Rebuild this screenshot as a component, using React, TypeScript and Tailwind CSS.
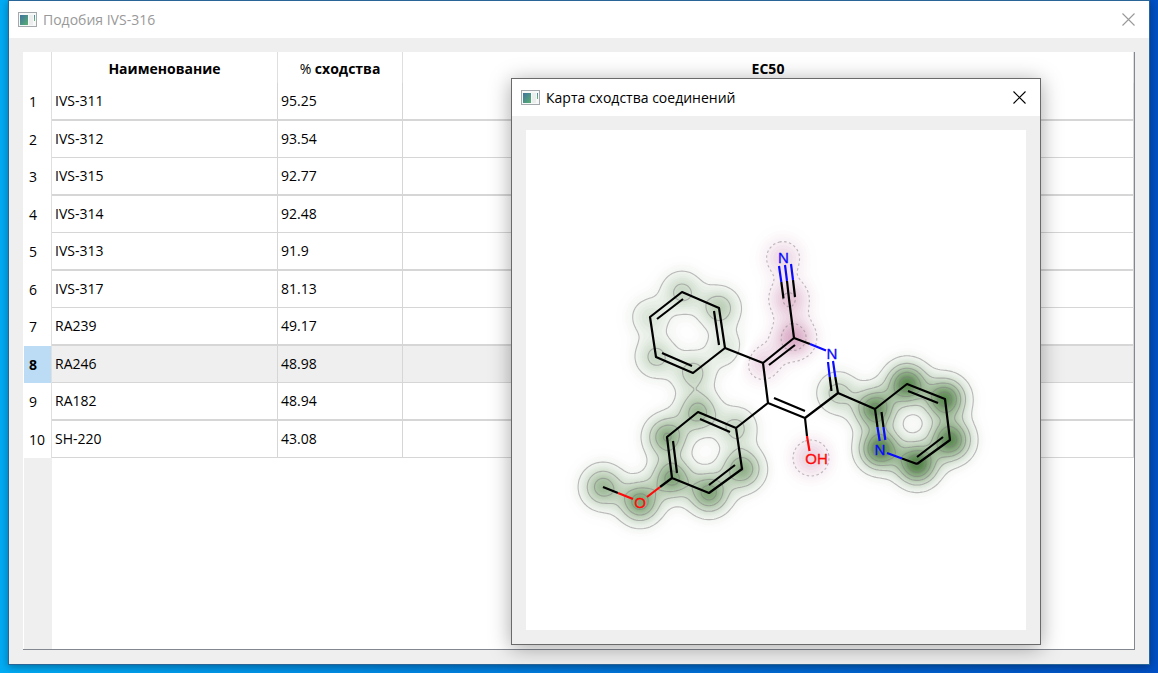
import React, { useMemo } from "react";

type Point = [number, number];
type Atom = { x: number; y: number; weight: number };

const ROWS = [
  { name: "IVS-311", similarity: "95.25" },
  { name: "IVS-312", similarity: "93.54" },
  { name: "IVS-315", similarity: "92.77" },
  { name: "IVS-314", similarity: "92.48" },
  { name: "IVS-313", similarity: "91.9" },
  { name: "IVS-317", similarity: "81.13" },
  { name: "RA239", similarity: "49.17" },
  { name: "RA246", similarity: "48.98" },
  { name: "RA182", similarity: "48.94" },
  { name: "SH-220", similarity: "43.08" },
];
const SELECTED = 7;

const ATOMS: Atom[] = [
  // phenyl
  { x: 156, y: 162, weight: 1.8 },
  { x: 193, y: 178, weight: 2.2 },
  { x: 199, y: 218, weight: 1.1 },
  { x: 167, y: 243, weight: 1.9 },
  { x: 130, y: 227, weight: 1.8 },
  { x: 124, y: 187, weight: 1.2 },
  // methoxyphenyl
  { x: 172, y: 282, weight: 3.0 },
  { x: 210, y: 298, weight: 1.8 },
  { x: 216, y: 339, weight: 3.5 },
  { x: 183, y: 363, weight: 4.0 },
  { x: 146, y: 348, weight: 3.9 },
  { x: 141, y: 307, weight: 3.6 },
  { x: 114, y: 372, weight: 4.1 },
  { x: 77, y: 357, weight: 3.1 },
  // pyridyl
  { x: 349, y: 279, weight: 4.8 },
  { x: 381, y: 254, weight: 5.2 },
  { x: 419, y: 269, weight: 5.1 },
  { x: 424, y: 310, weight: 5.1 },
  { x: 391, y: 334, weight: 5.5 },
  { x: 354, y: 319, weight: 5.3 },
  // central ring and substituents
  { x: 312, y: 263, weight: 1.9 },
  { x: 268, y: 208, weight: -2.3 },
  { x: 237, y: 233, weight: -1.1 },
  { x: 263, y: 169, weight: -1.65 },
  { x: 257, y: 128, weight: -1.1 },
  { x: 285, y: 328, weight: -1.3 },
];

const STEP = 2;
const CELLS = 250;
const SPREAD = 340;
const PEAK = 6.8;

function buildField(): Float64Array {
  const side = CELLS + 1;
  const field = new Float64Array(side * side);
  for (let j = 0; j < side; j++) {
    for (let i = 0; i < side; i++) {
      let v = 0;
      for (const a of ATOMS) {
        const dx = i * STEP - a.x;
        const dy = j * STEP - a.y;
        v += a.weight * Math.exp(-(dx * dx + dy * dy) / SPREAD);
      }
      field[j * side + i] = v;
    }
  }
  return field;
}

// Edge numbers of a cell: 0 top, 1 right, 2 bottom, 3 left.
const SEGMENTS: [number, number][][] = [
  [], [[3, 0]], [[0, 1]], [[3, 1]], [[1, 2]], [[3, 0], [1, 2]], [[0, 2]], [[3, 2]],
  [[2, 3]], [[2, 0]], [[0, 1], [2, 3]], [[2, 1]], [[1, 3]], [[1, 0]], [[0, 3]], [],
];

// Closed outlines of the region where sign * field is above the level.
function contour(field: Float64Array, level: number, sign: number): string {
  const side = CELLS + 1;
  const at = (i: number, j: number) => sign * field[j * side + i];
  const next = new Map<number, number>();
  const points = new Map<number, Point>();
  const edge = (i: number, j: number, e: number): number => {
    const vertical = e === 1 || e === 3;
    const ci = e === 1 ? i + 1 : i;
    const cj = e === 2 ? j + 1 : j;
    const key = (cj * side + ci) * 2 + (vertical ? 1 : 0);
    if (!points.has(key)) {
      const a = at(ci, cj);
      const b = vertical ? at(ci, cj + 1) : at(ci + 1, cj);
      const t = (level - a) / (b - a);
      points.set(
        key,
        vertical ? [ci * STEP, (cj + t) * STEP] : [(ci + t) * STEP, cj * STEP],
      );
    }
    return key;
  };
  for (let j = 0; j < CELLS; j++) {
    for (let i = 0; i < CELLS; i++) {
      const code =
        (at(i, j) > level ? 1 : 0) +
        (at(i + 1, j) > level ? 2 : 0) +
        (at(i + 1, j + 1) > level ? 4 : 0) +
        (at(i, j + 1) > level ? 8 : 0);
      for (const [from, to] of SEGMENTS[code]) {
        next.set(edge(i, j, from), edge(i, j, to));
      }
    }
  }
  let path = "";
  while (next.size > 0) {
    let key = next.keys().next().value as number;
    let command = "M";
    while (next.has(key)) {
      const [x, y] = points.get(key) as Point;
      path += `${command}${x.toFixed(1)} ${y.toFixed(1)}`;
      command = "L";
      const following = next.get(key) as number;
      next.delete(key);
      key = following;
    }
    path += "Z";
  }
  return path;
}

function shade(level: number, sign: number): string {
  const t = Math.min(1, level / PEAK);
  const end = sign > 0 ? [39, 100, 25] : [142, 1, 82];
  const rgb = end.map((c) => Math.round(255 + (c - 255) * t));
  return `rgb(${rgb.join(",")})`;
}

const BLACK_BONDS =
  "M156 162L193 178L199 218L167 243L130 227L124 187Z" +
  "M157 169L131 189M188 181L193 215M166 236L136 223" +
  "M199 218L237 233L268 208M243 235L269 215M237 233L242 273L279 288L312 263M248 268L279 281" +
  "M242 273L210 298" +
  "M172 282L210 298L216 339L183 363L146 348L141 307Z" +
  "M174 289L204 302M209 335L183 355M151 343L147 311" +
  "M268 208L263 169L261 151M257.5 168.5L255.3 152M269 167L267 150" +
  "M268 208L284 214M312 263L309.3 247M305.5 261L303.7 247" +
  "M279 288L281 306M312 263L349 279L381 254L419 269L424 310L391 334" +
  "M382 261L412 273M417 307L391 327M349 279L351.5 297M355.5 282L357.5 297M391 334L376 328.5" +
  "M146 348L134 357M77 357L92 363";
const BLUE_BONDS =
  "M261 151L259 135M255.3 152L253 136M267 150L265 134M284 214L300 220.5M309.3 247L307 231M303.7 247L302 232" +
  "M351.5 297L353.7 311M357.5 297L359.3 310M376 328.5L361 323";
const RED_BONDS = "M281 306L283.5 321M134 357L121 367M92 363L107 369";

function SimilarityMap() {
  const { bands, lines } = useMemo(() => {
    const field = buildField();
    const bands: { d: string; fill: string }[] = [];
    const lines: { d: string; dashed: boolean }[] = [];
    for (const sign of [1, -1]) {
      const top = sign > 0 ? 6.4 : 2.8;
      for (let level = 0.04; level < top; level += level < 0.3 ? 0.08 : 0.16) {
        bands.push({ d: contour(field, level, sign), fill: shade(level, sign) });
      }
      for (let level = 0.5; level < top; level += 1) {
        lines.push({ d: contour(field, level, sign), dashed: sign < 0 });
      }
    }
    return { bands, lines };
  }, []);

  return (
    <svg
      viewBox="0 0 500 500"
      className="block w-full bg-white"
      role="img"
      aria-label="Карта сходства соединений"
    >
      {bands.map((b, i) => (
        <path key={i} d={b.d} fill={b.fill} fillRule="evenodd" />
      ))}
      {lines.map((l, i) => (
        <path
          key={i}
          d={l.d}
          fill="none"
          stroke="#807c80"
          strokeOpacity="0.5"
          strokeWidth="1.1"
          strokeDasharray={l.dashed ? "2.5 2.5" : undefined}
        />
      ))}
      <g fill="none" strokeWidth="2.2" strokeLinejoin="round" strokeLinecap="butt">
        <path d={BLACK_BONDS} stroke="#000000" />
        <path d={BLUE_BONDS} stroke="#0a0aff" />
        <path d={RED_BONDS} stroke="#ff0a0a" />
      </g>
      <g fontFamily="'Liberation Sans', sans-serif" fontSize="15" textAnchor="middle">
        <text x="257.5" y="133" fill="#0a0aff" stroke="#0a0aff" strokeWidth="0.3">N</text>
        <text x="306" y="229" fill="#0a0aff" stroke="#0a0aff" strokeWidth="0.3">N</text>
        <text x="354" y="325" fill="#0a0aff" stroke="#0a0aff" strokeWidth="0.3">N</text>
        <text x="114" y="378" fill="#ff0a0a" stroke="#ff0a0a" strokeWidth="0.3">O</text>
        <text x="290.5" y="334" fill="#ff0a0a" stroke="#ff0a0a" strokeWidth="0.3">OH</text>
      </g>
    </svg>
  );
}

function AppIcon() {
  return (
    <svg width="19" height="15" viewBox="0 0 19 15" aria-hidden="true" className="shrink-0">
      <defs>
        <linearGradient id="pane" x1="0" y1="0" x2="1" y2="1">
          <stop offset="0" stopColor="#3f72a0" />
          <stop offset="1" stopColor="#58b070" />
        </linearGradient>
        <linearGradient id="bar" x1="0" y1="0" x2="0" y2="1">
          <stop offset="0" stopColor="#4a86a4" />
          <stop offset="1" stopColor="#69b87a" />
        </linearGradient>
      </defs>
      <rect x="0.5" y="0.5" width="18" height="14" fill="#f7f8f8" stroke="#a3a9ad" />
      <rect x="2" y="3" width="8" height="10" fill="url(#pane)" />
      <rect x="11" y="3" width="4" height="10" fill="#eceeee" />
      <rect x="16" y="3" width="1" height="6" fill="url(#bar)" />
    </svg>
  );
}

function CloseButton() {
  return (
    <button type="button" aria-label="Закрыть" className="flex size-8 items-center justify-center">
      <svg width="13" height="13" viewBox="0 0 13 13" aria-hidden="true">
        <path d="M0.5 0.5L12.5 12.5M12.5 0.5L0.5 12.5" stroke="currentColor" strokeWidth="1.1" />
      </svg>
    </button>
  );
}

const HEAD = "border-r border-[#dfdfdf] px-1 pt-0.5 text-center font-bold";

function ResultsTable() {
  return (
    <table className="w-full table-fixed border-separate border-spacing-0 leading-5">
      <colgroup>
        <col className="w-7" />
        <col className="w-[226px]" />
        <col className="w-[125px]" />
        <col />
      </colgroup>
      <thead>
        <tr className="h-[31px]">
          <td className="border-r border-[#dfdfdf]" />
          <th scope="col" className={HEAD}>Наименование</th>
          <th scope="col" className={HEAD}>
            <span className="font-medium">%</span> сходства
          </th>
          <th scope="col" className={HEAD}>EC50</th>
        </tr>
      </thead>
      <tbody>
        {ROWS.map((row, i) => {
          const cell =
            i % 2 === 0
              ? "border-r border-b-2 border-[#d6d6d6] pl-[3px]"
              : "border-r border-b border-[#d6d6d6] pl-[3px]";
          return (
            <tr
              key={row.name}
              className={
                i === SELECTED ? "h-[37px] bg-[#efefef]" : i % 2 === 0 ? "h-[38px]" : "h-[37px]"
              }
            >
              <th
                scope="row"
                className={
                  i === SELECTED
                    ? "border-r border-[#dfdfdf] bg-[#bbdcf4] pl-[5px] text-left font-bold"
                    : "border-r border-[#dfdfdf] pl-[5px] text-left font-normal"
                }
              >
                {i + 1}
              </th>
              <td className={cell}>{row.name}</td>
              <td className={cell}>{row.similarity}</td>
              <td className={cell} />
            </tr>
          );
        })}
      </tbody>
    </table>
  );
}

export default function App() {
  return (
    <div className="relative flex min-h-screen flex-col bg-linear-to-r from-[#00acf5] via-[#0078dc] to-[#004fc4] px-2 pb-2 font-['Open_Sans','Noto_Sans',sans-serif] text-sm text-black">
      <main className="flex flex-1 flex-col border border-[#2a6598] bg-[#efefef] shadow-[0_2px_8px_rgba(0,0,0,0.35)]">
        <header className="flex h-[37px] items-center gap-1.5 bg-white pr-[5px] pl-[9px] text-[#999999]">
          <AppIcon />
          <h1 className="flex-1">Подобия IVS-316</h1>
          <CloseButton />
        </header>
        <div className="flex flex-1 flex-col p-3.5">
          <div className="flex flex-1 flex-col border-r border-b border-[#828790] bg-white pl-px">
            <ResultsTable />
            <div className="w-7 flex-1 bg-[#efefef]" />
          </div>
        </div>
      </main>

      <section
        role="dialog"
        aria-labelledby="map-title"
        className="absolute top-[78px] left-[511px] w-[530px] border border-[#6a6a6a] bg-[#efefef] shadow-[0_3px_20px_rgba(0,0,0,0.35)]"
      >
        <header className="flex h-[37px] items-center gap-1.5 bg-white pr-[5px] pl-[9px]">
          <AppIcon />
          <h2 id="map-title" className="flex-1">Карта сходства соединений</h2>
          <CloseButton />
        </header>
        <div className="p-3.5">
          <SimilarityMap />
        </div>
      </section>
    </div>
  );
}
